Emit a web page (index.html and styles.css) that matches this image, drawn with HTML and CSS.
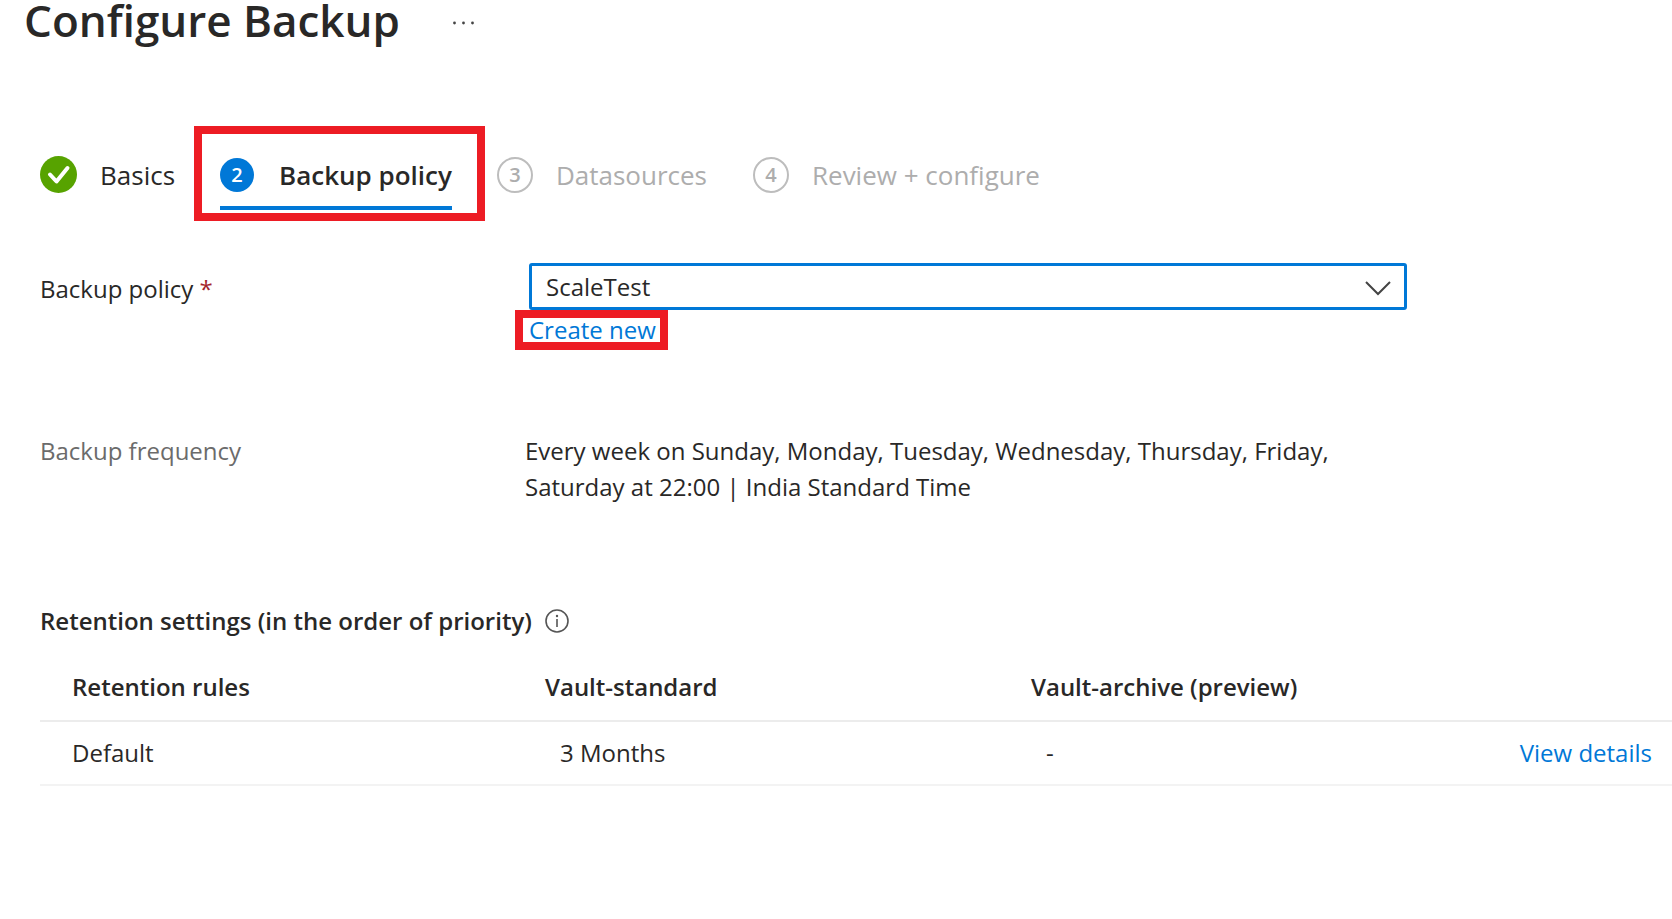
FILE: index.html
```html
<!DOCTYPE html>
<html lang="en">
<head>
<meta charset="utf-8">
<title>Configure Backup</title>
<link rel="stylesheet" href="styles.css">
</head>
<body>
<header class="page-header">
  <h1 class="page-title">Configure Backup</h1>
  <button class="more" type="button" aria-label="More actions">
    <svg width="24" height="6" viewBox="0 0 24 6" fill="#444"><circle cx="2.5" cy="3" r="1.4"/><circle cx="11.5" cy="3" r="1.4"/><circle cx="20.5" cy="3" r="1.4"/></svg>
  </button>
</header>
<main class="content">
  <nav aria-label="Steps">
    <ol class="steps">
      <li class="step step-done">
        <button class="step-button" type="button">
          <svg class="step-icon" width="37" height="37" viewBox="0 0 37 37"><circle cx="18.5" cy="18.5" r="18.5" fill="#57a300"/><path d="M10 18.5l6.5 7 11-13.5" fill="none" stroke="#fff" stroke-width="4" stroke-linecap="round" stroke-linejoin="round"/></svg>
          <span>Basics</span>
        </button>
      </li>
      <li class="step step-active">
        <button class="step-button" type="button" aria-current="step">
          <span class="badge badge-active">2</span>
          <span>Backup policy</span>
        </button>
      </li>
      <li class="step step-pending">
        <button class="step-button" type="button"><span class="badge">3</span><span>Datasources</span></button>
      </li>
      <li class="step step-pending">
        <button class="step-button" type="button"><span class="badge">4</span><span>Review + configure</span></button>
      </li>
    </ol>
  </nav>

  <div class="field policy-field">
    <label class="label" for="policy">Backup policy <span class="required">*</span></label>
    <div class="control">
      <div class="select-wrap">
        <select class="select" id="policy"><option>ScaleTest</option></select>
        <svg class="chevron" width="26" height="15" viewBox="0 0 26 15"><path d="M1 1l12 12L25 1" fill="none" stroke="#444" stroke-width="2"/></svg>
      </div>
      <a class="link create-link" href="#">Create new</a>
    </div>
  </div>

  <div class="field frequency-field">
    <div class="label muted">Backup frequency</div>
    <div class="value">Every week on Sunday, Monday, Tuesday, Wednesday, Thursday, Friday, Saturday at 22:00 | India Standard Time</div>
  </div>

  <section>
    <div class="section-head">
      <h2 class="section-title">Retention settings (in the order of priority)</h2>
      <svg width="24" height="24" viewBox="0 0 24 24"><circle cx="12" cy="12" r="11" fill="none" stroke="#555" stroke-width="1.6"/><circle cx="12" cy="7" r="1.2" fill="#555"/><path d="M12 10v8" stroke="#555" stroke-width="1.6"/></svg>
    </div>
    <table class="rules">
      <colgroup><col class="col-rule"><col class="col-standard"><col class="col-archive"><col></colgroup>
      <thead>
        <tr><th scope="col">Retention rules</th><th scope="col">Vault-standard</th><th scope="col">Vault-archive (preview)</th><td></td></tr>
      </thead>
      <tbody>
        <tr><td>Default</td><td class="indent">3 Months</td><td class="indent">-</td><td class="details"><a class="link" href="#">View details</a></td></tr>
      </tbody>
    </table>
  </section>
</main>
</body>
</html>
```
FILE: styles.css
```css
* {
  box-sizing: border-box;
}

body {
  margin: 0;
  background: #fff;
  color: #292827;
  font-family: "Open Sans", "Noto Sans", sans-serif;
  font-size: 24px;
  line-height: 36px;
}

button {
  padding: 0;
  border: 0;
  background: none;
  color: inherit;
  font: inherit;
}

.page-header {
  display: flex;
  align-items: center;
  gap: 52px;
  padding-left: 24px;
}

.page-title {
  margin: 0;
  font-size: 44px;
  line-height: 40px;
  font-weight: 600;
}

.more {
  display: flex;
  padding-top: 6px;
}

.content {
  padding: 86px 0 0 40px;
}

.steps {
  display: flex;
  align-items: center;
  margin: 0;
  padding: 0;
  list-style: none;
  font-size: 26px;
}

.step-done,
.step-pending {
  padding-top: 2px;
}

.step-button {
  display: flex;
  align-items: center;
  gap: 23px;
  white-space: nowrap;
}

.step-active {
  margin: 0 12px 0 19px;
  padding: 16px 25px 3px 18px;
  border: 8px solid #ed1c24;
  font-weight: 600;
}

.step-active .step-button {
  gap: 25px;
  padding-bottom: 13px;
  padding-top: 7px;
  border-bottom: 4px solid #0078d7;
}

.step-pending {
  color: #adadad;
}

.step-pending + .step-pending {
  margin-left: 46px;
}

.badge {
  display: flex;
  align-items: center;
  justify-content: center;
  width: 36px;
  height: 36px;
  border: 2px solid #bdbdbd;
  border-radius: 50%;
  font-size: 20px;
  font-weight: 600;
}

.badge-active {
  width: 34px;
  height: 34px;
  border: 0;
  background: #0078d7;
  color: #fff;
}

.field {
  display: grid;
  grid-template-columns: 489px minmax(0, 878px);
}

.policy-field {
  padding-top: 42px;
}

.label {
  padding-top: 8px;
}

.required {
  color: #a4262c;
}

.select-wrap {
  position: relative;
}

.select {
  display: block;
  width: 100%;
  height: 47px;
  padding: 0 48px 0 14px;
  border: 3px solid #0078d7;
  border-radius: 3px;
  background: #fff;
  color: inherit;
  font: inherit;
  appearance: none;
}

.chevron {
  position: absolute;
  top: 18px;
  right: 16px;
  pointer-events: none;
}

.link {
  color: #0078d7;
  text-decoration: none;
}

.create-link {
  display: inline-block;
  margin-left: -14px;
  padding: 0 4px 0 6px;
  border: 8px solid #ed1c24;
  line-height: 24px;
}

.frequency-field {
  grid-template-columns: 485px minmax(0, 840px);
  padding-top: 83px;
}

.frequency-field .label {
  padding-top: 0;
}

.muted {
  color: #6b6b6b;
}

.section-head {
  display: flex;
  align-items: center;
  gap: 13px;
  padding-top: 98px;
}

.section-title {
  margin: 0;
  font-size: 24px;
  font-weight: 600;
}

.rules {
  width: 100%;
  border-collapse: collapse;
  table-layout: fixed;
}

.col-rule {
  width: 505px;
}

.col-standard {
  width: 486px;
}

.col-archive {
  width: 400px;
}

.rules th,
.rules td {
  padding: 13px 0 13px 32px;
  border-bottom: 2px solid #ececec;
  text-align: left;
  font-weight: 400;
}

.rules tbody td {
  border-bottom-color: #f3f3f3;
}

.rules th {
  padding: 30px 0 15px 32px;
  font-weight: 600;
}

.rules th + th,
.rules td + td {
  padding-left: 0;
}

.rules td.indent {
  padding-left: 15px;
}

.rules td.details {
  padding-right: 20px;
  text-align: right;
}
```
